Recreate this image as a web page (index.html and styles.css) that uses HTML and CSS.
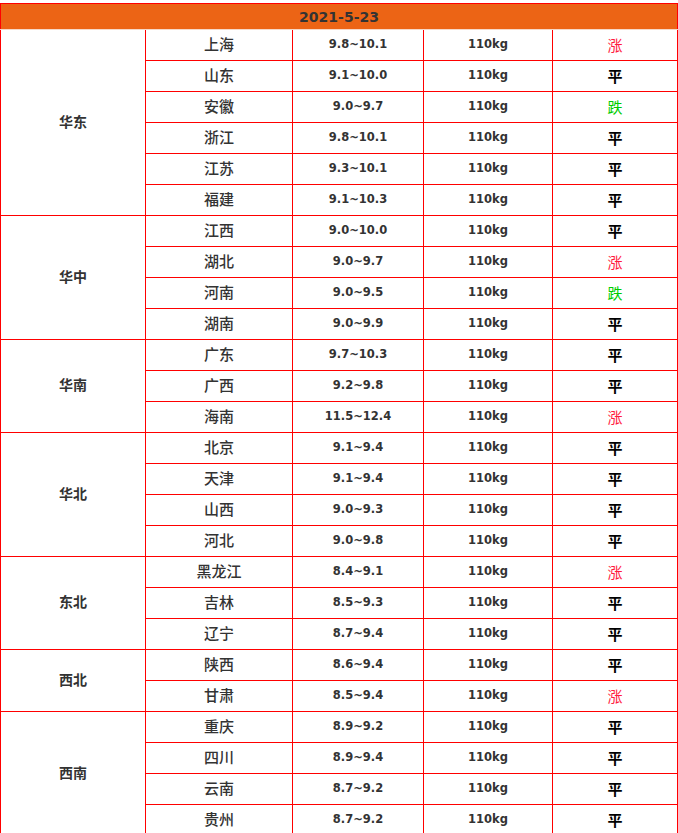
FILE: index.html
```html
<!DOCTYPE html>
<html lang="zh">
<head>
<meta charset="utf-8">
<link rel="stylesheet" href="styles.css">
</head>
<body>
<table class="price">
  <colgroup>
    <col class="c1"><col class="c2"><col class="c3"><col class="c4"><col class="c5">
  </colgroup>
  <thead>
    <tr class="head"><th colspan="5">2021-5-23</th></tr>
  </thead>
  <tbody>
    <tr><td class="region" rowspan="6">华东</td><td class="prov">上海</td><td class="num">9.8~10.1</td><td class="num">110kg</td><td class="up">涨</td></tr>
    <tr><td class="prov">山东</td><td class="num">9.1~10.0</td><td class="num">110kg</td><td class="flat">平</td></tr>
    <tr><td class="prov">安徽</td><td class="num">9.0~9.7</td><td class="num">110kg</td><td class="down">跌</td></tr>
    <tr><td class="prov">浙江</td><td class="num">9.8~10.1</td><td class="num">110kg</td><td class="flat">平</td></tr>
    <tr><td class="prov">江苏</td><td class="num">9.3~10.1</td><td class="num">110kg</td><td class="flat">平</td></tr>
    <tr><td class="prov">福建</td><td class="num">9.1~10.3</td><td class="num">110kg</td><td class="flat">平</td></tr>

    <tr><td class="region" rowspan="4">华中</td><td class="prov">江西</td><td class="num">9.0~10.0</td><td class="num">110kg</td><td class="flat">平</td></tr>
    <tr><td class="prov">湖北</td><td class="num">9.0~9.7</td><td class="num">110kg</td><td class="up">涨</td></tr>
    <tr><td class="prov">河南</td><td class="num">9.0~9.5</td><td class="num">110kg</td><td class="down">跌</td></tr>
    <tr><td class="prov">湖南</td><td class="num">9.0~9.9</td><td class="num">110kg</td><td class="flat">平</td></tr>

    <tr><td class="region" rowspan="3">华南</td><td class="prov">广东</td><td class="num">9.7~10.3</td><td class="num">110kg</td><td class="flat">平</td></tr>
    <tr><td class="prov">广西</td><td class="num">9.2~9.8</td><td class="num">110kg</td><td class="flat">平</td></tr>
    <tr><td class="prov">海南</td><td class="num">11.5~12.4</td><td class="num">110kg</td><td class="up">涨</td></tr>

    <tr><td class="region" rowspan="4">华北</td><td class="prov">北京</td><td class="num">9.1~9.4</td><td class="num">110kg</td><td class="flat">平</td></tr>
    <tr><td class="prov">天津</td><td class="num">9.1~9.4</td><td class="num">110kg</td><td class="flat">平</td></tr>
    <tr><td class="prov">山西</td><td class="num">9.0~9.3</td><td class="num">110kg</td><td class="flat">平</td></tr>
    <tr><td class="prov">河北</td><td class="num">9.0~9.8</td><td class="num">110kg</td><td class="flat">平</td></tr>

    <tr><td class="region" rowspan="3">东北</td><td class="prov">黑龙江</td><td class="num">8.4~9.1</td><td class="num">110kg</td><td class="up">涨</td></tr>
    <tr><td class="prov">吉林</td><td class="num">8.5~9.3</td><td class="num">110kg</td><td class="flat">平</td></tr>
    <tr><td class="prov">辽宁</td><td class="num">8.7~9.4</td><td class="num">110kg</td><td class="flat">平</td></tr>

    <tr><td class="region" rowspan="2">西北</td><td class="prov">陕西</td><td class="num">8.6~9.4</td><td class="num">110kg</td><td class="flat">平</td></tr>
    <tr><td class="prov">甘肃</td><td class="num">8.5~9.4</td><td class="num">110kg</td><td class="up">涨</td></tr>

    <tr><td class="region" rowspan="4">西南</td><td class="prov">重庆</td><td class="num">8.9~9.2</td><td class="num">110kg</td><td class="flat">平</td></tr>
    <tr><td class="prov">四川</td><td class="num">8.9~9.4</td><td class="num">110kg</td><td class="flat">平</td></tr>
    <tr><td class="prov">云南</td><td class="num">8.7~9.2</td><td class="num">110kg</td><td class="flat">平</td></tr>
    <tr><td class="prov">贵州</td><td class="num">8.7~9.2</td><td class="num">110kg</td><td class="flat">平</td></tr>
  </tbody>
</table>
</body>
</html>
```
FILE: styles.css
```css
html, body {
  margin: 0;
  padding: 0;
  background: #fff;
}
body {
  padding-top: 3px;
  font-family: "Noto Sans CJK SC", "DejaVu Sans", sans-serif;
  color: #333;
}
.price {
  border-collapse: collapse;
  table-layout: fixed;
  width: 677px;
}
.c1 { width: 145px; }
.c2 { width: 147px; }
.c3 { width: 131px; }
.c4 { width: 129px; }
.c5 { width: 125px; }

.price td, .price th {
  border: 1px solid #ff0000;
  padding: 0;
  text-align: center;
  vertical-align: middle;
  line-height: 1;
}
.price .head th {
  height: 25px;
  background: #ec6415;
  border-bottom: 1px solid #f6d8c8;
  font-family: "DejaVu Sans", sans-serif;
  font-weight: bold;
  font-size: 14px;
  color: #333;
}
.price tbody tr {
  height: 31px;
}
.price tbody td {
  height: 30px;
  box-sizing: border-box;
}
.price .region {
  font-size: 14px;
  font-weight: bold;
  padding-bottom: 4px;
}
.price .prov {
  font-size: 15px;
  font-weight: 500;
  padding-bottom: 4px;
}
.price .num {
  font-family: "DejaVu Sans", sans-serif;
  font-weight: bold;
  font-size: 11.5px;
  padding-bottom: 1px;
}
.price .up, .price .down, .price .flat {
  font-size: 15px;
  padding-bottom: 2px;
}
.price .up {
  color: #ff1a40;
}
.price .down {
  color: #00cc00;
}
.price .flat {
  color: #000;
  font-weight: bold;
}
```
